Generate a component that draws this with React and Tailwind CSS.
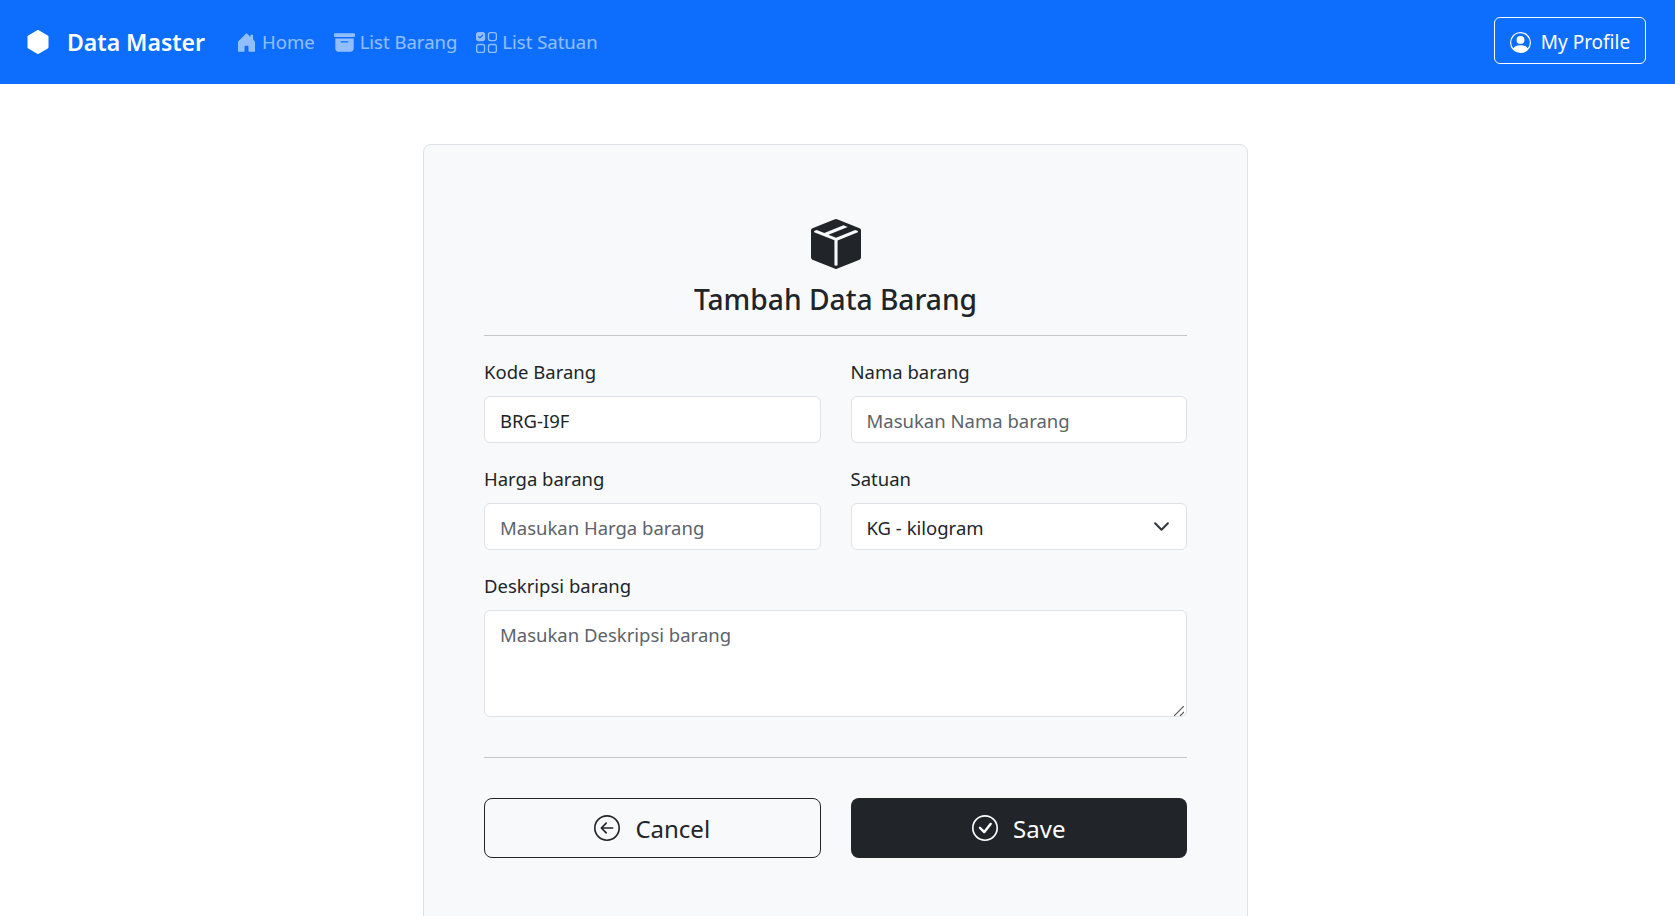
import React from 'react'
import { BsHexagonFill, BsHouseDoorFill, BsArchiveFill, BsUiChecksGrid, BsPersonCircle, BsBoxSeamFill, BsArrowLeftCircle, BsCheckCircle } from 'react-icons/bs'

function Navbar() {
  const links = [
    { label: 'Home', icon: <BsHouseDoorFill className="w-[21px] h-[21px]" /> },
    { label: 'List Barang', icon: <BsArchiveFill className="w-[21px] h-[21px]" /> },
    { label: 'List Satuan', icon: <BsUiChecksGrid className="w-[21px] h-[21px]" /> },
  ]
  return (
    <nav className="h-[84px] bg-[#0d6efd] flex items-center justify-between pl-[26px] pr-[29px]">
      <div className="flex items-center">
        <BsHexagonFill className="w-[24px] h-[24px] text-white" />
        <span className="ml-[17px] mr-[31px] text-[23px] font-semibold text-white">Data Master</span>
        <div className="flex items-center gap-[19px]">
          {links.map(l => (
            <a key={l.label} className="flex items-center gap-[5px] text-[18.5px] text-white/55">
              {l.icon}
              <span>{l.label}</span>
            </a>
          ))}
        </div>
      </div>
      <button className="h-[47px] w-[152px] mb-[4px] pt-[5px] flex items-center justify-center gap-[10px] border border-white rounded-[6px] text-white text-[19px]">
        <BsPersonCircle className="w-[21px] h-[21px]" />
        My Profile
      </button>
    </nav>
  )
}

function Field({ label, children }) {
  return (
    <div className="flex flex-col">
      <label className="text-[18.5px] leading-[27px] text-[#212529] mb-[11px]">{label}</label>
      {children}
    </div>
  )
}

const inputClass = "w-full h-[47px] px-[15px] pt-[2px] bg-white border border-[#dee2e6] rounded-[6px] text-[18.5px] text-[#212529] placeholder:text-[#5c636a] outline-none"

export default function App() {
  return (
    <div className="h-[916px] overflow-hidden bg-white font-['Noto_Sans',sans-serif]">
      <Navbar />
      <main className="flex justify-center pt-[60px] pr-[4px]">
        <div className="w-[825px] h-[900px] bg-[#f8f9fa] border border-[#dee2e6] rounded-[8px] px-[60px] pt-[74px]">
          <div className="flex flex-col items-center">
            <BsBoxSeamFill className="w-[50px] h-[50px] text-[#212529]" />
            <h1 className="mt-[10px] text-[28.2px] leading-[40px] font-medium text-[#212529]">Tambah Data Barang</h1>
          </div>
          <hr className="mt-[16px] border-t border-[#c4c5c7]" />
          <form className="mt-[22px]">
            <div className="grid grid-cols-2 gap-x-[30px] gap-y-[22px]">
              <Field label="Kode Barang">
                <input className={inputClass} defaultValue="BRG-I9F" />
              </Field>
              <Field label="Nama barang">
                <input className={inputClass} placeholder="Masukan Nama barang" />
              </Field>
              <Field label="Harga barang">
                <input className={inputClass} placeholder="Masukan Harga barang" />
              </Field>
              <Field label="Satuan">
                <div className="relative">
                  <select className={inputClass + " appearance-none"} defaultValue="kg">
                    <option value="kg">KG - kilogram</option>
                  </select>
                  <svg className="absolute right-[17px] top-[15px] w-[17px] h-[17px] pointer-events-none" viewBox="0 0 16 16" fill="none">
                    <path d="m2 5 6 6 6-6" stroke="#343a40" strokeWidth="2" strokeLinecap="round" strokeLinejoin="round" />
                  </svg>
                </div>
              </Field>
              <div className="col-span-2">
                <Field label="Deskripsi barang">
                  <div className="relative">
                    <textarea className="w-full h-[107px] block resize-none px-[15px] pt-[10px] pb-[8px] bg-white border border-[#dee2e6] rounded-[6px] text-[18.5px] text-[#212529] placeholder:text-[#5c636a] outline-none" placeholder="Masukan Deskripsi barang" />
                    <svg className="absolute right-[3px] bottom-[1px] w-[10px] h-[10px] pointer-events-none" viewBox="0 0 10 10" fill="none">
                      <path d="M0 10 10 0M6 10l4-4" stroke="#5a5a5a" strokeWidth="1.2" />
                    </svg>
                  </div>
                </Field>
              </div>
            </div>
            <hr className="mt-[40px] border-t border-[#c4c5c7]" />
            <div className="grid grid-cols-2 gap-x-[30px] mt-[40px]">
              <button type="button" className="h-[60px] flex items-center justify-center gap-[15px] border border-[#212529] rounded-[8px] text-[#212529] text-[24px]">
                <BsArrowLeftCircle className="w-[26px] h-[26px]" />
                <span className="pt-[2px]">Cancel</span>
              </button>
              <button type="button" className="h-[60px] flex items-center justify-center gap-[15px] bg-[#212529] rounded-[8px] text-white text-[24px]">
                <BsCheckCircle className="w-[26px] h-[26px]" />
                <span className="pt-[2px]">Save</span>
              </button>
            </div>
          </form>
        </div>
      </main>
    </div>
  )
}
